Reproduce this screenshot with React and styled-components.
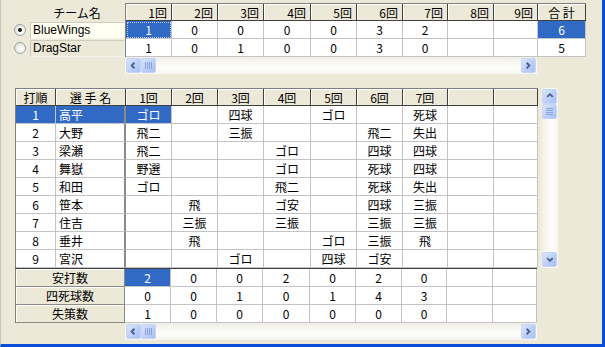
import styled, { createGlobalStyle } from 'styled-components';

const GlobalStyle = createGlobalStyle`
  body {
    margin: 0;
    background: #ECE9D8;
    font-family: "MS UI Gothic", "Noto Sans CJK JP", sans-serif;
    font-size: 12px;
  }
`;

const INNING_W = [46, 46, 46, 47, 46, 46, 45, 46, 44];

const teams = [
  { name: 'BlueWings', runs: ['1', '0', '0', '0', '0', '3', '2', '', ''], total: '6' },
  { name: 'DragStar', runs: ['1', '0', '1', '0', '0', '3', '0', '', ''], total: '5' },
];

const batters = [
  ['1', '高平', ['ゴロ', '', '四球', '', 'ゴロ', '', '死球', '', '']],
  ['2', '大野', ['飛二', '', '三振', '', '', '飛二', '失出', '', '']],
  ['3', '梁瀬', ['飛二', '', '', 'ゴロ', '', '四球', '四球', '', '']],
  ['4', '舞嶽', ['野選', '', '', 'ゴロ', '', '死球', '四球', '', '']],
  ['5', '和田', ['ゴロ', '', '', '飛二', '', '死球', '失出', '', '']],
  ['6', '笹本', ['', '飛', '', 'ゴ安', '', '四球', '三振', '', '']],
  ['7', '住吉', ['', '三振', '', '三振', '', '三振', '三振', '', '']],
  ['8', '垂井', ['', '飛', '', '', 'ゴロ', '三振', '飛', '', '']],
  ['9', '宮沢', ['', '', 'ゴロ', '', '四球', 'ゴ安', '', '', '']],
];

const summary = [
  ['安打数', ['2', '0', '0', '2', '0', '2', '0', '', '']],
  ['四死球数', ['0', '0', '1', '0', '1', '4', '3', '', '']],
  ['失策数', ['1', '0', '0', '0', '0', '0', '0', '', '']],
];

const Window = styled.div`
  width: 605px;
  height: 347px;
  box-sizing: border-box;
  background: #ECE9D8;
  border-left: 1px solid #c9c7bc;
  border-right: 3px solid #0A4BD8;
  border-bottom: 3px solid #0A4BD8;
  padding-top: 3px;
  display: flex;
  flex-direction: column;
  gap: 14px;
  overflow: hidden;
`;

const TopSection = styled.div`
  display: flex;
  align-items: flex-start;
`;

const TeamPanel = styled.div`
  width: 124px;
  display: flex;
  flex-direction: column;
`;

const TeamHeader = styled.div`
  height: 18px;
  padding-left: 28px;
  display: flex;
  align-items: center;
  justify-content: center;
  color: #000;
`;

const TeamRow = styled.div`
  height: 18px;
  display: flex;
  align-items: center;
  gap: 4px;
  padding-left: 13px;
`;

const Radio = styled.span`
  width: 12px;
  height: 12px;
  box-sizing: border-box;
  border-radius: 50%;
  border: 1px solid #9aa2ad;
  background: radial-gradient(circle at 65% 65%, #ffffff 0%, #f1f0ea 45%, #d6d3c8 100%);
  display: flex;
  align-items: center;
  justify-content: center;
  flex-shrink: 0;

  &::after {
    content: '';
    width: 4px;
    height: 4px;
    border-radius: 50%;
    background: ${(p) => (p.$checked ? '#1a1a1a' : 'transparent')};
  }
`;

const TeamName = styled.div`
  width: 95px;
  height: 17px;
  box-sizing: border-box;
  border: 1px solid #cfccbe;
  border-right-color: #f4f3ee;
  border-bottom-color: #f4f3ee;
  background: ${(p) => (p.$sel ? '#FFFFF2' : '#ECE9D8')};
  padding-left: 2px;
  display: flex;
  align-items: center;
  font-family: "MS UI Gothic", "Liberation Sans", "Noto Sans CJK JP", sans-serif;
`;

const GridBlock = styled.div`
  display: flex;
  flex-direction: column;
`;

const Grid = styled.div`
  display: grid;
  grid-template-columns: ${(p) => p.$cols};
  background: #fff;
  border-left: ${(p) => (p.$frame ? '1px solid #7f7f7f' : 'none')};
  border-top: ${(p) => (p.$top ? `1px solid ${p.$top}` : 'none')};
`;

const HeadCell = styled.div`
  height: 17px;
  box-sizing: border-box;
  background: #ECE9D8;
  box-shadow: inset 1px 1px #ffffff;
  border-right: 1px solid #404040;
  border-bottom: 1px solid #404040;
  display: flex;
  align-items: center;
  justify-content: ${(p) => (p.$align === 'right' ? 'flex-end' : 'center')};
  padding: 0 4px;
  white-space: nowrap;
  color: #000;
`;

const Cell = styled.div`
  height: 18px;
  box-sizing: border-box;
  display: flex;
  align-items: center;
  justify-content: ${(p) => (p.$align === 'left' ? 'flex-start' : 'center')};
  padding: 0 3px;
  background: ${(p) => (p.$sel ? '#316AC5' : '#ffffff')};
  color: ${(p) => (p.$sel ? '#ffffff' : '#000000')};
  border-right: ${(p) => (p.$split ? '2px solid #8c8a80' : '1px solid #c4c4c4')};
  border-bottom: 1px solid #c4c4c4;
  outline: ${(p) => (p.$focus ? '1px dotted #b8c8f0' : 'none')};
  outline-offset: -2px;
  white-space: nowrap;
  overflow: hidden;
`;

const LabelCell = styled.div`
  height: 18px;
  box-sizing: border-box;
  background: #ECE9D8;
  box-shadow: inset 1px 1px #ffffff;
  border-right: 2px solid #8c8a80;
  border-bottom: 1px solid #8c8a80;
  display: flex;
  align-items: center;
  justify-content: center;
`;

const HTrack = styled.div`
  width: ${(p) => p.$w}px;
  height: 17px;
  box-sizing: border-box;
  padding: 1px 1px;
  display: flex;
  align-items: stretch;
  background: linear-gradient(#f0eee6, #fdfdfa 60%, #f6f5f0);
`;

const VTrack = styled.div`
  width: 17px;
  height: ${(p) => p.$h}px;
  box-sizing: border-box;
  padding: 1px;
  display: flex;
  flex-direction: column;
  background: linear-gradient(90deg, #f0eee6, #fdfdfa 60%, #f6f5f0);
`;

const ScrollBtn = styled.div`
  width: 15px;
  height: 15px;
  flex-shrink: 0;
  box-sizing: border-box;
  border: 1px solid #c7d5f6;
  border-radius: 2px;
  background: linear-gradient(135deg, #dbe5fe, #b9cdf9 60%, #a9c0f2);
  display: flex;
  align-items: center;
  justify-content: center;
`;

const Spacer = styled.div`
  flex: 1;
`;

function Chevron({ dir }) {
  const paths = {
    left: 'M6.5 3 L3.5 6 L6.5 9',
    right: 'M3.5 3 L6.5 6 L3.5 9',
    up: 'M3 6.5 L6 3.5 L9 6.5',
    down: 'M3 4.5 L6 7.5 L9 4.5',
  };
  return (
    <svg width="11" height="11" viewBox="0 0 11 12">
      <path d={paths[dir]} fill="none" stroke="#4d6185" strokeWidth="2" />
    </svg>
  );
}

function Grip({ vertical }) {
  return (
    <svg width="9" height="9" viewBox="0 0 9 9">
      {[1, 3, 5, 7].map((v) =>
        vertical ? (
          <line key={v} x1="1" y1={v + 0.5} x2="8" y2={v + 0.5} stroke="#8ba3e0" strokeWidth="1" />
        ) : (
          <line key={v} x1={v + 0.5} y1="1" x2={v + 0.5} y2="8" stroke="#8ba3e0" strokeWidth="1" />
        )
      )}
    </svg>
  );
}

function HScrollbar({ width }) {
  return (
    <HTrack $w={width}>
      <ScrollBtn>
        <Chevron dir="left" />
      </ScrollBtn>
      <ScrollBtn>
        <Grip />
      </ScrollBtn>
      <Spacer />
      <ScrollBtn>
        <Chevron dir="right" />
      </ScrollBtn>
    </HTrack>
  );
}

function VScrollbar({ height }) {
  return (
    <VTrack $h={height}>
      <ScrollBtn>
        <Chevron dir="up" />
      </ScrollBtn>
      <ScrollBtn>
        <Grip vertical />
      </ScrollBtn>
      <Spacer />
      <ScrollBtn>
        <Chevron dir="down" />
      </ScrollBtn>
    </VTrack>
  );
}

const LowerSection = styled.div`
  display: flex;
  flex-direction: column;
  padding-left: 14px;
`;

const LowerRow = styled.div`
  display: flex;
  align-items: flex-start;
  gap: ${(p) => p.$gap || 0}px;
`;

const LabelColumn = styled.div`
  width: 110px;
  display: flex;
  flex-direction: column;
`;

const inningCols = INNING_W.map((w) => `${w}px`).join(' ');
const innings = ['1', '2', '3', '4', '5', '6', '7', '8', '9'];

export default function App() {
  return (
    <Window>
      <GlobalStyle />
      <TopSection>
        <TeamPanel>
          <TeamHeader>チーム名</TeamHeader>
          {teams.map((t, i) => (
            <TeamRow key={t.name}>
              <Radio $checked={i === 0} />
              <TeamName $sel={i === 0}>{t.name}</TeamName>
            </TeamRow>
          ))}
        </TeamPanel>
        <GridBlock>
          <Grid $cols={inningCols} $frame $top="#7f7f7f">
            {innings.map((n) => (
              <HeadCell key={n} $align="right">
                {n}回
              </HeadCell>
            ))}
            {teams.map((t, r) =>
              t.runs.map((v, c) => (
                <Cell key={`${r}-${c}`} $sel={r === 0 && c === 0} $focus={r === 0 && c === 0}>
                  {v}
                </Cell>
              ))
            )}
          </Grid>
          <HScrollbar width={412} />
        </GridBlock>
        <Grid $cols="48px" $top="#7f7f7f">
          <HeadCell>合 計</HeadCell>
          {teams.map((t, r) => (
            <Cell key={t.name} $sel={r === 0}>
              {t.total}
            </Cell>
          ))}
        </Grid>
      </TopSection>

      <LowerSection>
        <LowerRow $gap={3}>
          <Grid $cols={`40px 70px ${inningCols}`} $frame $top="#7f7f7f">
            <HeadCell>打順</HeadCell>
            <HeadCell>選 手 名</HeadCell>
            {innings.map((n) => (
              <HeadCell key={n}>{Number(n) <= 7 ? `${n}回` : ''}</HeadCell>
            ))}
            {batters.map(([no, name, plays], r) => [
              <Cell key={`n${r}`} $sel={r === 0}>
                {no}
              </Cell>,
              <Cell key={`p${r}`} $sel={r === 0} $align="left" $split>
                {name}
              </Cell>,
              ...plays.map((v, c) => (
                <Cell key={`${r}-${c}`} $sel={r === 0 && c === 0}>
                  {v}
                </Cell>
              )),
            ])}
          </Grid>
          <VScrollbar height={180} />
        </LowerRow>
        <LowerRow>
          <LabelColumn>
            <Grid $cols="110px" $frame $top="#404040">
              {summary.map(([label]) => (
                <LabelCell key={label}>{label}</LabelCell>
              ))}
            </Grid>
          </LabelColumn>
          <GridBlock>
            <Grid $cols={inningCols} $top="#404040">
              {summary.map(([label, vals], r) =>
                vals.map((v, c) => (
                  <Cell key={`${label}-${c}`} $sel={r === 0 && c === 0}>
                    {v}
                  </Cell>
                ))
              )}
            </Grid>
            <HScrollbar width={412} />
          </GridBlock>
        </LowerRow>
      </LowerSection>
    </Window>
  );
}
